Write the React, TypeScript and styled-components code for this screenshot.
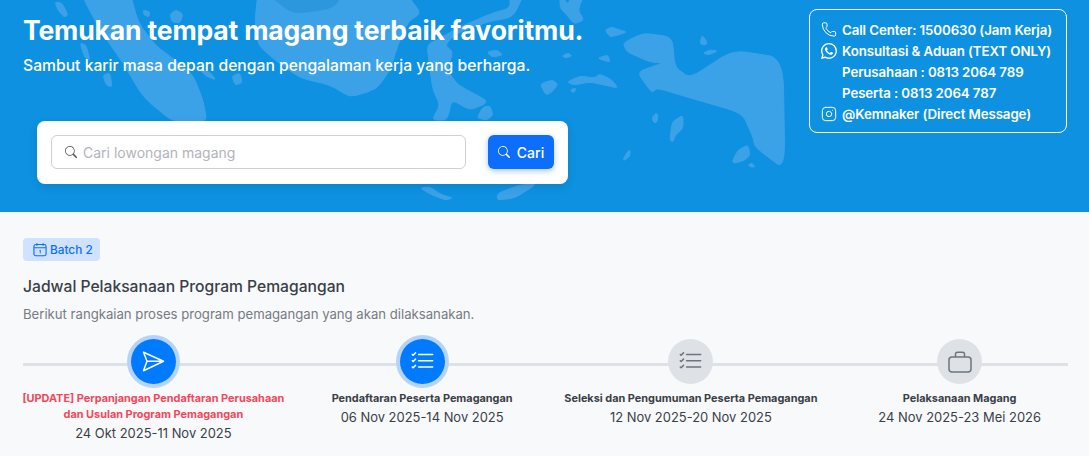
import React from "react";
import styled, { createGlobalStyle } from "styled-components";
import { Phone, Instagram } from "lucide-react";
import { BsWhatsapp, BsSearch, BsListCheck } from "react-icons/bs";

const GlobalStyle = createGlobalStyle`
  html, body {
    margin: 0;
    padding: 0;
    overflow: hidden;
    background: #f8f9fb;
    font-family: "Inter", "Liberation Sans", sans-serif;
  }
  * { box-sizing: border-box; }
`;

const Hero = styled.section`
  position: relative;
  height: 212px;
  padding: 9px 22px 0 23px;
  display: flex;
  justify-content: space-between;
  align-items: flex-start;
  background: #0d91e0;
  overflow: hidden;
`;

const MapArt = styled.svg`
  position: absolute;
  inset: 0;
  width: 1089px;
  height: 212px;
`;

const Land = styled.path<{ $dark?: boolean }>`
  fill: ${(p) => (p.$dark ? "#2d97de" : "#3ba2e8")};
  stroke: ${(p) => (p.$dark ? "#2d97de" : "#3ba2e8")};
  stroke-width: 1;
  stroke-linejoin: round;
`;

const HeroLeft = styled.div`
  position: relative;
  display: flex;
  flex-direction: column;
`;

const Title = styled.h1`
  margin: 3px 0 0;
  font-size: 26.6px;
  line-height: 36px;
  font-weight: 700;
  letter-spacing: -0.2px;
  color: #fff;
  white-space: nowrap;
`;

const Subtitle = styled.p`
  margin: 7px 0 0;
  font-size: 15.7px;
  line-height: 22px;
  font-weight: 500;
  color: #fff;
  white-space: nowrap;
`;

const SearchCard = styled.div`
  width: 531px;
  height: 63px;
  margin: 44px 0 0 14px;
  padding: 14px;
  display: flex;
  justify-content: space-between;
  background: #fff;
  border-radius: 8px;
  box-shadow: 0 3px 10px rgba(0, 0, 0, 0.1);
`;

const SearchField = styled.div`
  width: 415px;
  height: 34px;
  padding: 0 13px;
  display: flex;
  align-items: center;
  gap: 6px;
  font-size: 14px;
  color: #b3b3bb;
  background: #fff;
  border: 1px solid #d0d0d0;
  border-radius: 6px;
  svg { color: #555; }
`;

const SearchButton = styled.button`
  width: 66px;
  height: 34px;
  padding: 0;
  display: flex;
  align-items: center;
  justify-content: center;
  gap: 7px;
  font-family: inherit;
  font-size: 14px;
  font-weight: 500;
  color: #fff;
  background: #0d6efd;
  border: none;
  border-radius: 6px;
  box-shadow: 0 2px 6px rgba(13, 110, 253, 0.35);
`;

const InfoBox = styled.div`
  position: relative;
  width: 258px;
  height: 124px;
  padding: 9px 11px;
  border: 1px solid #fff;
  border-radius: 8px;
  color: #fff;
`;

const InfoRow = styled.div`
  height: 21px;
  display: flex;
  align-items: center;
  gap: 5px;
  font-size: 13.3px;
  font-weight: 600;
  letter-spacing: -0.1px;
  white-space: nowrap;
`;

const InfoIcon = styled.span`
  width: 16px;
  height: 16px;
  display: flex;
  align-items: center;
  justify-content: center;
  flex: none;
`;

const Content = styled.main`
  padding: 26px 21px 0 23px;
`;

const Badge = styled.div`
  width: 77px;
  height: 23px;
  padding-left: 10px;
  display: flex;
  align-items: center;
  gap: 3px;
  font-size: 11.8px;
  font-weight: 500;
  color: #0d6efd;
  background: #cfe2ff;
  border-radius: 4px;
`;

const Heading = styled.h2`
  margin: 15px 0 0;
  font-size: 15.65px;
  line-height: 22px;
  font-weight: 500;
  color: #3a3f47;
`;

const Lead = styled.p`
  margin: 6px 0 0;
  font-size: 13.15px;
  line-height: 20px;
  color: #767b83;
`;

const Timeline = styled.div`
  position: relative;
  margin-top: 12px;
`;

const Track = styled.div`
  position: absolute;
  top: 27px;
  left: 0;
  right: 0;
  height: 3px;
  background: #dee2e6;
`;

const Steps = styled.div`
  position: relative;
  width: 1075px;
  margin-left: -4px;
  display: grid;
  grid-template-columns: repeat(4, 268.75px);
`;

const Step = styled.div`
  display: flex;
  flex-direction: column;
  align-items: center;
  text-align: center;
`;

const Circle = styled.div<{ $active?: boolean }>`
  width: 45px;
  height: 45px;
  margin-top: 3px;
  display: flex;
  align-items: center;
  justify-content: center;
  border-radius: 50%;
  color: ${(p) => (p.$active ? "#fff" : "#6c757d")};
  background: ${(p) => (p.$active ? "#007bff" : "#dee2e6")};
  box-shadow: ${(p) => (p.$active ? "0 0 0 4px #b6d4fb" : "none")};
`;

const StepName = styled.div<{ $alert?: boolean }>`
  margin-top: 6px;
  width: 268px;
  font-size: 10.9px;
  line-height: 16px;
  font-weight: 700;
  color: ${(p) => (p.$alert ? "#f6465a" : "#3a3f47")};
`;

const StepDate = styled.div`
  margin-top: 2px;
  font-size: 12.95px;
  line-height: 18px;
  color: #3a3f47;
  white-space: nowrap;
`;

const islands = [
  "80,-8 100,30 123,63 143,97 173,122 207,122 203,100 193,75 175,60 155,45 138,22 130,-8",
  "55,2 62,3 68,15 64,17 58,10",
  "80,43 86,45 90,60 85,58",
  "103,75 110,73 112,87 106,85",
  "200,70 210,72 216,80 206,76",
  "232,76 240,73 242,83 235,85",
  "143,10 150,12 149,17 144,15",
  "170,14 176,10 183,14 180,23 172,22",
  "258,-8 255,20 258,45 275,60 300,78 330,85 350,97 368,92 378,87 390,70 398,45 408,22 421,13 405,-8",
  "525,-8 513,17 487,22 457,33 445,45 453,52 447,70 458,85 486,100 485,104 470,110 452,100 447,120 432,120 440,105 433,90 430,70 427,45 440,38 460,27 490,14 510,8 510,-8",
  "477,118 483,107 490,106 493,115 487,120",
  "487,52 497,50 503,55 492,57",
  "540,84 552,80 558,84 552,92 546,95",
  "567,82 580,76 594,78 600,74 612,80 618,88 604,85 590,82 574,85",
  "570,90 576,88 574,93",
  "562,56 568,53 572,56 566,58",
  "598,58 608,55 610,62 602,60",
  "605,30 612,27 620,30 627,32 618,35 610,37",
  "560,-8 568,5 572,-8 585,-8 578,10 584,20 574,24 566,14 560,8",
  "700,44 702,35 707,42 706,45",
  "703,53 710,50 718,51 708,55",
  "623,43 643,33 672,37 675,67 690,78 733,50 783,58 785,170 755,147 753,137 742,113 687,97 657,88 652,93 637,72 663,63 650,62 627,52",
  "654,123 652,118 656,113 658,115 657,122",
  "670,140 672,122 683,115 683,128 675,136 673,142",
  "623,160 627,152 630,150 630,156 625,160",
  "732,162 738,150 748,145 750,155 745,160 736,163",
  "748,165 752,163 755,167 751,167",
  "420,188 430,187 442,195 453,198 445,200 430,194",
  "497,200 498,193 520,185 537,184 515,198",
];

// rounds only the corners of an outline so the coast keeps its shape
const coastPath = (points: string) => {
  const pts = points.split(" ").map((p) => p.split(",").map(Number));
  const toward = (a: number[], b: number[]) => [a[0] + (b[0] - a[0]) * 0.28, a[1] + (b[1] - a[1]) * 0.28];
  return (
    pts
      .map((p, i) => {
        const before = toward(p, pts[(i + pts.length - 1) % pts.length]);
        const after = toward(p, pts[(i + 1) % pts.length]);
        return `${i === 0 ? "M" : "L"}${before[0]} ${before[1]}Q${p[0]} ${p[1]} ${after[0]} ${after[1]}`;
      })
      .join("") + "Z"
  );
};

const contact = [
  { icon: <Phone size={17} strokeWidth={1.5} />, text: "Call Center: 1500630 (Jam Kerja)" },
  { icon: <BsWhatsapp size={16} />, text: "Konsultasi & Aduan (TEXT ONLY)" },
  { icon: null, text: "Perusahaan : 0813 2064 789" },
  { icon: null, text: "Peserta : 0813 2064 787" },
  { icon: <Instagram size={16} strokeWidth={1.5} />, text: "@Kemnaker (Direct Message)" },
];

const CalendarIcon = () => (
  <svg width="14" height="15" viewBox="0 0 15 15" fill="none" stroke="currentColor" strokeWidth="1.2">
    <rect x="1" y="2.2" width="13" height="12" rx="2" />
    <path d="M1 5.6h13M4.2 0.8v2.6M10.8 0.8v2.6" />
    <path d="M7 8.6l.8-.4v3.4" strokeWidth="1" />
  </svg>
);

const SendIcon = () => (
  <svg width="23" height="21" viewBox="0 0 23 21" fill="none" stroke="currentColor" strokeWidth="1.5" strokeLinejoin="round">
    <path d="M1.5 1.2L21.5 10.2L1.5 19.8L5 10.2ZM5 10.2H21.5" />
  </svg>
);

const CaseIcon = () => (
  <svg width="24" height="22" viewBox="0 0 24 22" fill="none" stroke="currentColor" strokeWidth="1.5">
    <rect x="1" y="6" width="22" height="15" rx="3" />
    <path d="M7.5 6V3.2a2 2 0 0 1 2-2h5a2 2 0 0 1 2 2V6" />
  </svg>
);

const steps = [
  {
    name: "[UPDATE] Perpanjangan Pendaftaran Perusahaan dan Usulan Program Pemagangan",
    date: "24 Okt 2025-11 Nov 2025",
    alert: true,
    active: true,
    icon: <SendIcon />,
  },
  {
    name: "Pendaftaran Peserta Pemagangan",
    date: "06 Nov 2025-14 Nov 2025",
    active: true,
    icon: <BsListCheck size={25} />,
  },
  {
    name: "Seleksi dan Pengumuman Peserta Pemagangan",
    date: "12 Nov 2025-20 Nov 2025",
    icon: <BsListCheck size={25} />,
  },
  {
    name: "Pelaksanaan Magang",
    date: "24 Nov 2025-23 Mei 2026",
    icon: <CaseIcon />,
  },
];

const App = () => {
  return (
    <>
      <GlobalStyle />
      <Hero>
        <MapArt viewBox="0 0 1089 212">
          {islands.map((points) => (
            <Land key={points} d={coastPath(points)} />
          ))}
          <Land $dark d={coastPath("265,-8 293,14 333,8 345,-8")} />
        </MapArt>
        <HeroLeft>
          <Title>Temukan tempat magang terbaik favoritmu.</Title>
          <Subtitle>Sambut karir masa depan dengan pengalaman kerja yang berharga.</Subtitle>
          <SearchCard>
            <SearchField>
              <BsSearch size={12} />
              Cari lowongan magang
            </SearchField>
            <SearchButton>
              <BsSearch size={12} />
              Cari
            </SearchButton>
          </SearchCard>
        </HeroLeft>
        <InfoBox>
          {contact.map((row) => (
            <InfoRow key={row.text}>
              <InfoIcon>{row.icon}</InfoIcon>
              {row.text}
            </InfoRow>
          ))}
        </InfoBox>
      </Hero>
      <Content>
        <Badge>
          <CalendarIcon />
          Batch 2
        </Badge>
        <Heading>Jadwal Pelaksanaan Program Pemagangan</Heading>
        <Lead>Berikut rangkaian proses program pemagangan yang akan dilaksanakan.</Lead>
        <Timeline>
          <Track />
          <Steps>
            {steps.map((step) => (
              <Step key={step.name}>
                <Circle $active={step.active}>{step.icon}</Circle>
                <StepName $alert={step.alert}>{step.name}</StepName>
                <StepDate>{step.date}</StepDate>
              </Step>
            ))}
          </Steps>
        </Timeline>
      </Content>
    </>
  );
};

export default App;
